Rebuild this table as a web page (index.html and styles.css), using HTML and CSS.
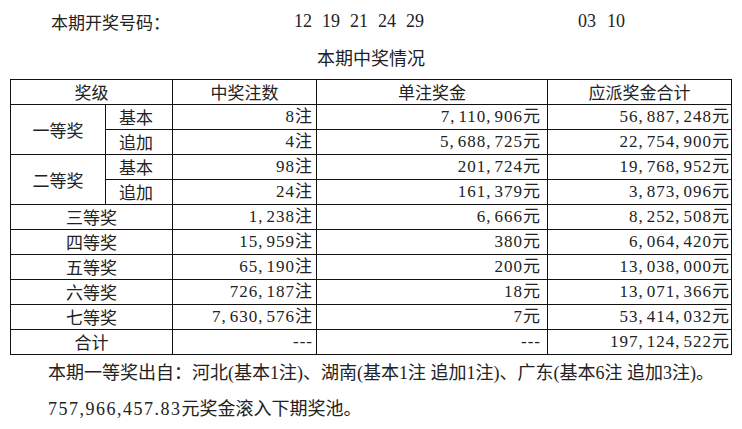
FILE: index.html
```html
<!DOCTYPE html>
<html lang="zh">
<head>
<meta charset="utf-8">
<title>本期中奖情况</title>
<link rel="stylesheet" href="styles.css">
</head>
<body>
<div class="page">
  <div class="draw">
    <span class="draw-label">本期开奖号码：</span>
    <span class="balls balls-main"><span>12</span><span>19</span><span>21</span><span>24</span><span>29</span></span>
    <span class="balls balls-extra"><span>03</span><span>10</span></span>
  </div>
  <div class="title">本期中奖情况</div>
  <table class="prize">
    <colgroup>
      <col class="w1"><col class="w2"><col class="w3"><col class="w4"><col class="w5">
    </colgroup>
    <thead>
      <tr><th colspan="2">奖级</th><th>中奖注数</th><th>单注奖金</th><th>应派奖金合计</th></tr>
    </thead>
    <tbody>
      <tr><td rowspan="2" class="lv">一等奖</td><td class="sub">基本</td><td class="n c3">8注</td><td class="n c4">7<span class="c">,</span>110<span class="c">,</span>906元</td><td class="n c5">56<span class="c">,</span>887<span class="c">,</span>248元</td></tr>
      <tr><td class="sub">追加</td><td class="n c3">4注</td><td class="n c4">5<span class="c">,</span>688<span class="c">,</span>725元</td><td class="n c5">22<span class="c">,</span>754<span class="c">,</span>900元</td></tr>
      <tr><td rowspan="2" class="lv">二等奖</td><td class="sub">基本</td><td class="n c3">98注</td><td class="n c4">201<span class="c">,</span>724元</td><td class="n c5">19<span class="c">,</span>768<span class="c">,</span>952元</td></tr>
      <tr><td class="sub">追加</td><td class="n c3">24注</td><td class="n c4">161<span class="c">,</span>379元</td><td class="n c5">3<span class="c">,</span>873<span class="c">,</span>096元</td></tr>
      <tr><td colspan="2" class="lv">三等奖</td><td class="n c3">1<span class="c">,</span>238注</td><td class="n c4">6<span class="c">,</span>666元</td><td class="n c5">8<span class="c">,</span>252<span class="c">,</span>508元</td></tr>
      <tr><td colspan="2" class="lv">四等奖</td><td class="n c3">15<span class="c">,</span>959注</td><td class="n c4">380元</td><td class="n c5">6<span class="c">,</span>064<span class="c">,</span>420元</td></tr>
      <tr><td colspan="2" class="lv">五等奖</td><td class="n c3">65<span class="c">,</span>190注</td><td class="n c4">200元</td><td class="n c5">13<span class="c">,</span>038<span class="c">,</span>000元</td></tr>
      <tr><td colspan="2" class="lv">六等奖</td><td class="n c3">726<span class="c">,</span>187注</td><td class="n c4">18元</td><td class="n c5">13<span class="c">,</span>071<span class="c">,</span>366元</td></tr>
      <tr><td colspan="2" class="lv">七等奖</td><td class="n c3">7<span class="c">,</span>630<span class="c">,</span>576注</td><td class="n c4">7元</td><td class="n c5">53<span class="c">,</span>414<span class="c">,</span>032元</td></tr>
      <tr><td colspan="2" class="lv">合计</td><td class="n c3">---</td><td class="n c4">---</td><td class="n c5">197<span class="c">,</span>124<span class="c">,</span>522元</td></tr>
    </tbody>
  </table>
  <div class="notes">
    <p>本期一等奖出自：河北(基本1注)、湖南(基本1注 追加1注)、广东(基本6注 追加3注)。</p>
    <p><span class="amt">757,966,457.83</span>元奖金滚入下期奖池。</p>
  </div>
</div>
</body>
</html>
```

FILE: styles.css
```css
html, body {
  margin: 0;
  padding: 0;
  background: #ffffff;
}

body {
  color: #222222;
  font-family: "Liberation Serif", "Noto Sans CJK SC", serif;
  font-size: 17px;
}

.page {
  width: 742px;
  height: 429px;
  overflow: hidden;
}

.draw {
  display: flex;
  align-items: center;
  height: 42px;
  padding-left: 51px;
  box-sizing: border-box;
}

.draw-label {
  width: 243px;
  font-family: "Noto Sans CJK SC", sans-serif;
  font-size: 17px;
}

.balls {
  display: flex;
  font-size: 18px;
}

.balls-main {
  width: 284px;
  gap: 10px;
}

.balls-extra {
  gap: 11px;
}

.title {
  height: 37px;
  box-sizing: border-box;
  padding-bottom: 7px;
  display: flex;
  align-items: center;
  justify-content: center;
  font-family: "Noto Sans CJK SC", sans-serif;
  font-size: 18px;
}

.prize {
  margin-left: 10px;
  width: 721px;
  border-collapse: collapse;
  table-layout: fixed;
  border: 1.5px solid #111;
}

.w1 { width: 95px; }
.w2 { width: 67px; }
.w3 { width: 144px; }
.w4 { width: 231px; }
.w5 { width: 184px; }

.prize th,
.prize td {
  border: 1px solid #111;
  height: 24px;
  padding: 0;
  line-height: 24px;
  font-weight: normal;
  font-size: 17px;
  font-family: "Noto Sans CJK SC", sans-serif;
  text-align: center;
  white-space: nowrap;
}

.prize td.sub {
  text-align: left;
  padding-left: 13px;
}

.prize td.n {
  text-align: right;
  font-family: "Liberation Serif", "Noto Sans CJK SC", serif;
  font-size: 17px;
  letter-spacing: 1px;
}

.prize td.c3 { padding-right: 3px; }
.prize td.c4 { padding-right: 6px; }
.prize td.c5 { padding-right: 1px; }

.c {
  letter-spacing: 4px;
}

.notes {
  padding-left: 48px;
}

.notes p {
  margin: 0;
  height: 36px;
  line-height: 36px;
  font-size: 18px;
  white-space: nowrap;
}

.amt {
  letter-spacing: 1.5px;
}
```
